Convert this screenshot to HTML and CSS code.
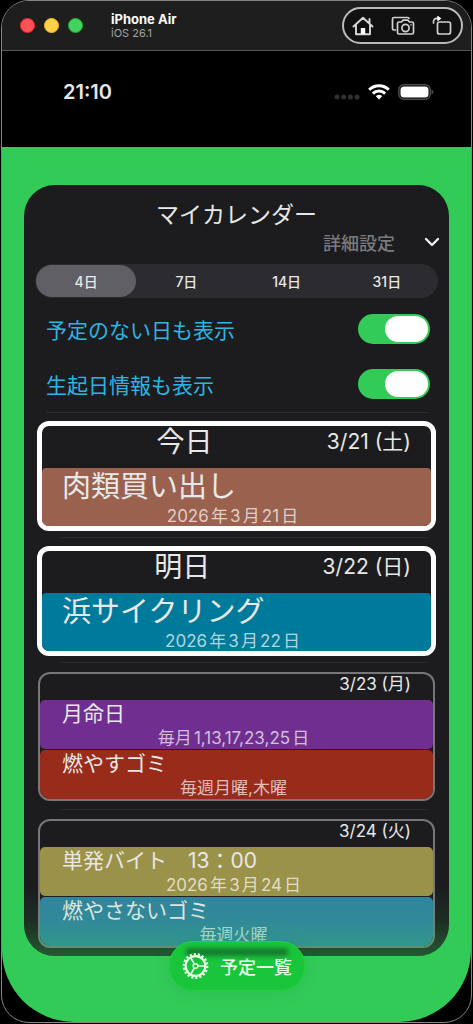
FILE: index.html
```html
<!DOCTYPE html>
<html lang="ja">
<head>
<meta charset="utf-8">
<meta name="viewport" content="width=device-width, initial-scale=1">
<title>マイカレンダー</title>
<link rel="stylesheet" href="styles.css">
</head>
<body>
<div class="window">
  <header class="titlebar">
    <div class="lights"><span class="light red"></span><span class="light yellow"></span><span class="light green"></span></div>
    <div class="device"><strong>iPhone Air</strong><span>iOS 26.1</span></div>
    <div class="tools">
      <button class="tool" aria-label="Home"><svg width="22" height="20" viewBox="0 0 22 20"><path d="M1.500 10.500 11 1.800l9.500 8.700M17.500 7.500V3M4 9.500v8.700h14V9.500" fill="none" stroke="#d8d8d8" stroke-width="1.900" stroke-linecap="round" stroke-linejoin="round"/><path d="M8.800 12h4.400v6H8.800z" fill="#fff"/></svg></button>
      <button class="tool" aria-label="Screenshot"><svg width="24" height="20" viewBox="0 0 24 20" fill="none" stroke="#d0d0d0" stroke-width="1.700" stroke-linejoin="round"><path d="M5 14H3Q1.500 14 1.500 12.500V3Q1.500 1.500 3 1.500H16.500Q18 1.500 18 3"/><path d="M8 6h2.500L12 4.200h5L18.500 6H21q1.500 0 1.500 1.500v9Q22.500 18 21 18H8Q6.500 18 6.500 16.500V7.500Q6.500 6 8 6z"/><circle cx="14.500" cy="12" r="3.600"/><path d="M19.500 8.800h1"/></svg></button>
      <button class="tool" aria-label="Rotate"><svg width="20" height="20" viewBox="0 0 20 20" fill="none" stroke="#d0d0d0" stroke-width="1.700" stroke-linecap="round"><rect x="5.500" y="6" width="13" height="12" rx="2"/><path d="M1.500 7V6q0-3.700 3.500-3.700h1.500"/><path d="M6 .5 8.800 2.500 6 4.500z" fill="#fff" stroke="#fff" stroke-width="1"/></svg></button>
    </div>
  </header>
  <div class="statusbar">
    <time>21:10</time>
    <div class="indicators">
      <svg width="26" height="6" viewBox="0 0 26 6" fill="#303030"><circle cx="3" cy="3" r="2.500"/><circle cx="9.700" cy="3" r="2.500"/><circle cx="16.400" cy="3" r="2.500"/><circle cx="23" cy="3" r="2.500"/></svg>
      <svg class="wifi" width="22" height="16" viewBox="0 0 22 16" fill="none" stroke="#fff" stroke-width="3"><path d="M1.200 5.800a14 14 0 0 1 19.600 0"/><path d="M4.800 9.600a9 9 0 0 1 12.400 0"/><path d="M11 15.500 7.800 12.300a4.700 4.700 0 0 1 6.400 0z" fill="#fff" stroke="none"/></svg>
      <svg width="36" height="16" viewBox="0 0 36 16"><rect x=".8" y=".8" width="31.400" height="14.400" rx="5" fill="none" stroke="#4c4c4c" stroke-width="1.500"/><rect x="2.500" y="2.500" width="28" height="11" rx="3.500" fill="#fff"/><path d="M33.500 5.500q2 .8 2 2.500t-2 2.500z" fill="#4c4c4c"/></svg>
    </div>
  </div>
  <main class="screen">
    <section class="card">
      <h1>マイカレンダー</h1>
      <button class="details">詳細設定<svg width="16" height="10" viewBox="0 0 16 10"><path d="M2 2l6 6 6-6" fill="none" stroke="#eee" stroke-width="2.400" stroke-linecap="round" stroke-linejoin="round"/></svg></button>
      <div class="segments">
        <label><input type="radio" name="range" checked><span>4日</span></label>
        <label><input type="radio" name="range"><span>7日</span></label>
        <label><input type="radio" name="range"><span>14日</span></label>
        <label><input type="radio" name="range"><span>31日</span></label>
      </div>
      <label class="setting">予定のない日も表示<input type="checkbox" role="switch" checked></label>
      <label class="setting">生起日情報も表示<input type="checkbox" role="switch" checked></label>
      <hr class="wide">
      <article class="day major">
        <header><h2>今日</h2><time>3/21 (土)</time></header>
        <div class="event brown"><h3>肉類買い出し</h3><p>2026年3月21日</p></div>
      </article>
      <hr>
      <article class="day major">
        <header><h2>明日</h2><time>3/22 (日)</time></header>
        <div class="event cyan"><h3>浜サイクリング</h3><p>2026年3月22日</p></div>
      </article>
      <hr>
      <article class="day minor">
        <header><time>3/23 (月)</time></header>
        <div class="event purple"><h3>月命日</h3><p>毎月1,13,17,23,25日</p></div>
        <div class="event rust"><h3>燃やすゴミ</h3><p>毎週月曜,木曜</p></div>
      </article>
      <hr>
      <article class="day minor">
        <header><time>3/24 (火)</time></header>
        <div class="event olive"><h3>単発バイト　13：00</h3><p>2026年3月24日</p></div>
        <div class="event teal"><h3>燃やさないゴミ</h3><p>毎週火曜</p></div>
      </article>
    </section>
    <button class="list-button">
      <svg width="28" height="28" viewBox="0 0 28 28" fill="none" stroke="#e4ffe8"><circle cx="14" cy="14" r="11.700" stroke-width="2.400" stroke-dasharray="2.200 1.876"/><circle cx="14" cy="14" r="9.800" stroke-width="2.200"/><circle cx="14" cy="14" r="2.300" stroke-width="1.500"/><path d="M16.300 14H23.500M12.800 12 9.200 5.700M12.800 16 9.200 22.300" stroke-width="1.600"/></svg>
      <span>予定一覧</span>
    </button>
  </main>
</div>
</body>
</html>
```
FILE: styles.css
```css
* { box-sizing: border-box; }

body {
  margin: 0;
  background: #000;
  color: #e8e8e8;
  font-family: Inter, "Noto Sans CJK JP", sans-serif;
}

h1, h2, h3, p { margin: 0; font-weight: 400; }

button {
  padding: 0;
  border: 0;
  background: none;
  color: inherit;
  font: inherit;
}

svg { display: block; flex: none; }

.window {
  display: flex;
  flex-direction: column;
  min-height: calc(100vh - 1px);
  margin: 0 1px;
  border: 1px solid #858585;
  border-radius: 28px;
  overflow: hidden;
}

.titlebar {
  display: flex;
  align-items: center;
  height: 50px;
  padding: 0 8px 0 18px;
  border-bottom: 1px solid #555;
  background: #1e1e1e;
}

.lights { display: flex; gap: 9px; }
.light { width: 15px; height: 15px; border: 1px solid; border-radius: 50%; }
.red { background: #ff5257; border-color: #f5222d; }
.yellow { background: #ffd04a; border-color: #f5b914; }
.green { background: #43d160; border-color: #17b52d; }

.device { display: flex; flex-direction: column; margin-left: 28px; }
.device strong { color: #fff; font-size: 13px; line-height: 15px; font-weight: 700; }
.device span { color: #a5a5a5; font-size: 11px; line-height: 13px; }

.tools {
  display: flex;
  align-items: center;
  justify-content: space-between;
  width: 121px;
  height: 37px;
  margin-left: auto;
  padding: 0 9px 0 8px;
  border: 2px solid #bbb;
  border-radius: 19px;
  background: #111;
}

.statusbar {
  display: flex;
  align-items: center;
  justify-content: space-between;
  height: 96px;
  padding: 0 37px 14px 61px;
}
.statusbar time { font-size: 20px; font-weight: 600; }
.indicators { display: flex; align-items: center; gap: 8px; }
.indicators svg:first-child { margin-top: 10px; }

.screen {
  position: relative;
  flex: 1;
  padding: 38px 22px 66px;
  border-radius: 0 0 72px 72px;
  background: #32cb58;
}

.card {
  position: relative;
  padding: 16px 13px 0;
  border-radius: 31px;
  background: #1c1c1e;
  overflow: hidden;
}
.card::after {
  content: "";
  position: absolute;
  inset: auto 0 0;
  height: 70px;
  background: linear-gradient(transparent, rgba(50, 203, 88, 0.1) 50%, rgba(50, 203, 88, 0.35));
  pointer-events: none;
}

h1 { font-size: 23px; line-height: 28px; text-align: center; }

.details {
  display: flex;
  align-items: center;
  gap: 29px;
  height: 26px;
  margin: 0 -4px 0 auto;
  color: #7b7b7f;
  font-size: 18px;
  font-weight: 500;
}

.segments {
  display: grid;
  grid-template-columns: repeat(4, 1fr);
  height: 34px;
  margin: 9px -2px 4px;
  padding: 1px;
  border-radius: 17px;
  background: #2c2c30;
  font-size: 14px;
  font-weight: 500;
}
.segments label { display: flex; }
.segments input { position: absolute; opacity: 0; }
.segments span {
  display: flex;
  flex: 1;
  align-items: center;
  justify-content: center;
  border-radius: 16px;
}
.segments input:checked + span { background: #605f66; }

.setting {
  display: flex;
  align-items: center;
  justify-content: space-between;
  height: 55px;
  padding: 0 6px 2px 9px;
  color: #2bb5e3;
  font-size: 21px;
}
.setting input {
  appearance: none;
  display: flex;
  justify-content: flex-end;
  width: 72px;
  height: 30px;
  margin: 0;
  padding: 2px;
  border-radius: 15px;
  background: #32cb58;
}
.setting input::before {
  content: "";
  width: 43px;
  border-radius: 13px;
  background: #fff;
}

hr {
  height: 1px;
  margin: 6px 9px 7px 24px;
  border: 0;
  background: #2d2d30;
}
hr.wide { margin-top: 0; margin-left: 9px; }

.day { overflow: hidden; border-radius: 12px; }
.day header { display: flex; align-items: center; padding-right: 20px; }
.day header time { margin-left: auto; }
.event { padding-left: 20px; }
.event p {
  padding-right: 28px;
  color: rgba(255, 255, 255, 0.7);
  font-size: 17px;
  text-align: center;
  text-autospace: normal;
}

.major { margin-top: 8px; border: 5px solid #fff; }
.major header { height: 42px; padding-bottom: 10px; }
.major h2 { margin: 0 auto; font-size: 28px; line-height: 32px; }
.major header time { margin-left: 0; padding-bottom: 4px; font-size: 21px; }
.major .event { border-radius: 4px 4px 0 0; }
.major h3 { font-size: 29px; line-height: 38px; }
.major p { line-height: 20px; }

.minor { margin: 9px 1px 8px; border: 2px solid #77777a; }
.minor header { height: 26px; padding-right: 22px; padding-bottom: 6px; font-size: 17px; line-height: 18px; }
.minor .event { height: 49px; padding-left: 22px; border-radius: 5px; }
.minor .event + .event { margin-top: 1px; }
.minor h3 { font-size: 21px; line-height: 27px; }
.minor p { line-height: 22px; }

.brown { background: #9a624e; }
.cyan { background: #007a9a; }
.purple { background: #702e90; }
.rust { background: #992b1b; }
.olive { background: #9b9249; }
.teal { background: #31829f; }

.list-button {
  position: absolute;
  bottom: 31px;
  left: 50%;
  display: flex;
  align-items: center;
  gap: 11px;
  height: 50px;
  padding: 0 12px;
  border: 1px solid #20d43c;
  border-radius: 25px;
  background: #19c53a;
  color: #e4ffe8;
  font-size: 18px;
  font-weight: 500;
  white-space: nowrap;
  transform: translateX(-50%);
  box-shadow: 0 3px 16px rgba(20, 120, 50, 0.15);
}
.list-button::before {
  content: "";
  position: absolute;
  top: 6px;
  left: 16px;
  right: 16px;
  height: 8px;
  border-radius: 4px;
  background: #167b31;
  filter: blur(2px);
}
.list-button svg, .list-button span { position: relative; }
```
